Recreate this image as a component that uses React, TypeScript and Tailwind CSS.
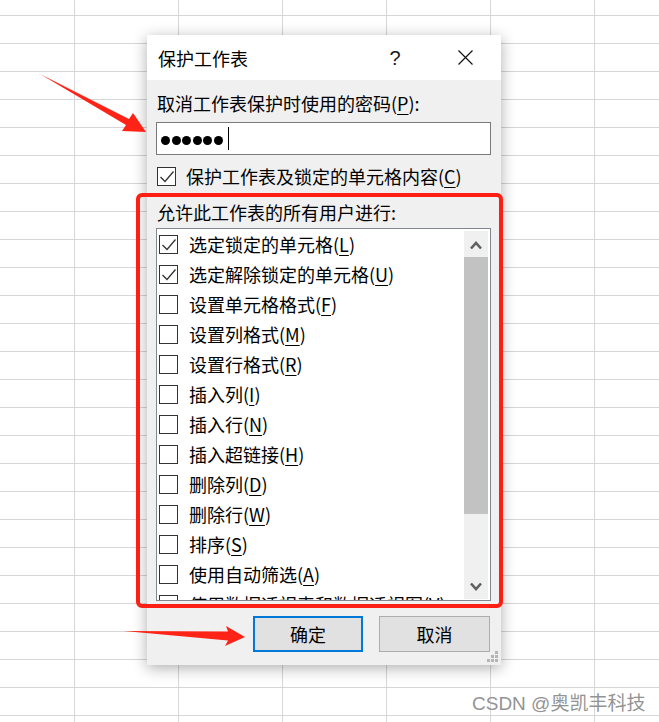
import React from "react";

const items: { label: string; key: string; checked?: boolean }[] = [
  { label: "选定锁定的单元格", key: "L", checked: true },
  { label: "选定解除锁定的单元格", key: "U", checked: true },
  { label: "设置单元格格式", key: "F" },
  { label: "设置列格式", key: "M" },
  { label: "设置行格式", key: "R" },
  { label: "插入列", key: "I" },
  { label: "插入行", key: "N" },
  { label: "插入超链接", key: "H" },
  { label: "删除列", key: "D" },
  { label: "删除行", key: "W" },
  { label: "排序", key: "S" },
  { label: "使用自动筛选", key: "A" },
  { label: "使用数据透视表和数据透视图", key: "V" },
];

function CheckBox({ checked }: { checked?: boolean }) {
  return (
    <span className="flex h-[19px] w-[19px] shrink-0 items-center justify-center border border-[#333] bg-white">
      {checked && (
        <svg width="17" height="17" viewBox="0 0 17 17">
          <polyline points="2.5,9 7,13.5 15.5,3.5" fill="none" stroke="#333" strokeWidth="1.3" />
        </svg>
      )}
    </span>
  );
}

function Key({ k }: { k: string }) {
  return (
    <>
      (<span className="underline underline-offset-[3px] decoration-1">{k}</span>)
    </>
  );
}

function Chevron({ up }: { up?: boolean }) {
  return (
    <svg width="12" height="9" viewBox="0 0 12 9">
      <polyline
        points={up ? "1,7.5 6,2 11,7.5" : "1,1.5 6,7 11,1.5"}
        fill="none"
        stroke="#5f5f5f"
        strokeWidth="2.6"
      />
    </svg>
  );
}

export default function App() {
  return (
    <div className="relative h-[722px] w-[659px] overflow-hidden bg-white bg-[linear-gradient(to_right,#d6d6d6_1px,transparent_1px),linear-gradient(to_bottom,#d6d6d6_1px,transparent_1px)] bg-[size:104px_28px] bg-[position:74px_15px] font-['Noto_Sans_CJK_SC',sans-serif] text-black">
      {/* dialog window */}
      <div className="absolute left-[147px] top-[35px] flex h-[630px] w-[354px] flex-col bg-[#f0f0f0] shadow-[0_3px_14px_rgba(0,0,0,0.32)]">
        <div className="flex h-[45px] items-center bg-white pl-[11px] pr-[28px]">
          <span className="flex-1 text-[18px] leading-[24px]">保护工作表</span>
          <span className="mr-[53px] w-[20px] text-center font-['Liberation_Sans',sans-serif] text-[20px] leading-[24px] text-[#1a1a1a]">
            ?
          </span>
          <svg width="15" height="15" viewBox="0 0 15 15">
            <path d="M0.5 0.5 L14.5 14.5 M14.5 0.5 L0.5 14.5" stroke="#111" strokeWidth="1.2" />
          </svg>
        </div>

        <div className="relative flex flex-1 flex-col px-[9px]">
          <div className="mt-[11px] h-[24px] pl-[1px] text-[18px] leading-[24px]">
            取消工作表保护时使用的密码<Key k="P" />:
          </div>
          <div className="mt-[7px] flex h-[33px] w-[335px] items-center border border-[#7a7a7a] bg-white pl-[4px]">
            <div className="mt-[3px] flex gap-[1.5px]">
              {[0, 1, 2, 3, 4, 5].map((i) => (
                <span key={i} className="h-[9px] w-[9px] rounded-full bg-black" />
              ))}
            </div>
            <span className="ml-[5px] h-[23px] w-[1px] bg-black" />
          </div>
          <div className="mt-[9px] flex h-[24px] items-center gap-[10px] pl-[1px] text-[18px] leading-[24px]">
            <CheckBox checked />
            <span>
              保护工作表及锁定的单元格内容<Key k="C" />
            </span>
          </div>
          <div className="mt-[12px] h-[24px] pl-[1px] text-[18px] leading-[24px]">允许此工作表的所有用户进行:</div>

          <div className="mt-[4px] flex h-[373px] w-[335px] border border-[#828790] bg-white">
            <div className="flex-1 overflow-hidden pl-[2px]">
              {items.map((it) => (
                <div key={it.key} className="flex h-[30px] items-center gap-[11px] text-[18px] leading-[24px]">
                  <CheckBox checked={it.checked} />
                  <span className="whitespace-nowrap">
                    {it.label}
                    <Key k={it.key} />
                  </span>
                </div>
              ))}
            </div>
            <div className="mb-[1px] mr-[2px] mt-[2px] flex w-[24px] flex-col bg-[#f0f0f0]">
              <div className="flex h-[26px] items-center justify-center pt-[3px]">
                <Chevron up />
              </div>
              <div className="h-[257px] bg-[#c2c2c2]" />
              <div className="flex-1" />
              <div className="flex h-[26px] items-center justify-center">
                <Chevron />
              </div>
            </div>
          </div>

          <div className="mt-[15px] flex justify-end pr-[2px] text-[18px]">
            <button className="flex h-[36px] w-[110px] items-center justify-center border-2 border-[#0078d7] bg-[#e1e1e1] leading-[24px]">
              确定
            </button>
            <button className="ml-[16px] flex h-[36px] w-[111px] items-center justify-center border border-[#adadad] bg-[#e1e1e1] leading-[24px]">
              取消
            </button>
          </div>

          <svg className="absolute bottom-[3px] right-[3px]" width="11" height="11" viewBox="0 0 11 11">
            <g fill="#b5b5b5">
              <rect x="8" y="0" width="3" height="3" />
              <rect x="4" y="4" width="3" height="3" />
              <rect x="8" y="4" width="3" height="3" />
              <rect x="0" y="8" width="3" height="3" />
              <rect x="4" y="8" width="3" height="3" />
              <rect x="8" y="8" width="3" height="3" />
            </g>
          </svg>
        </div>
      </div>

      {/* annotations */}
      <div className="absolute left-[136px] top-[193px] h-[415px] w-[367px] rounded-[6px] border-4 border-[#fe1f14]" />
      <svg className="pointer-events-none absolute inset-0" width="659" height="722" viewBox="0 0 659 722">
        <polygon points="40,74 129,119 133,113 146,132 122,131 126,125" fill="#fe2317" />
        <polygon points="124,631 228,631.5 226,626 245,637 225,646 228,640.5" fill="#fe2317" />
      </svg>

      <div className="absolute left-[472px] top-[692px] whitespace-nowrap font-['Liberation_Sans','Noto_Sans_CJK_SC',sans-serif] text-[19px] leading-[24px] text-[#939393] [text-shadow:0_0_1px_#fff]">
        CSDN @奥凯丰科技
      </div>
    </div>
  );
}
